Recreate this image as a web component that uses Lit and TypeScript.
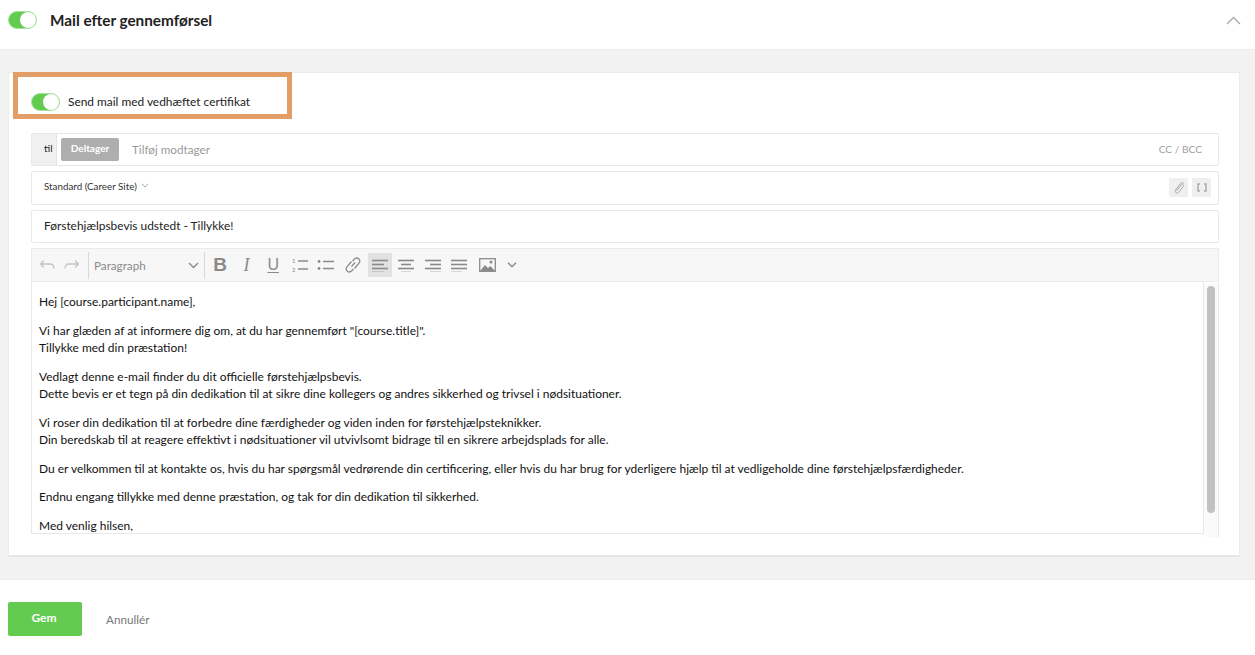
import { LitElement, html, css, svg } from "lit";
import { customElement } from "lit/decorators.js";

const ic = (w: number, h: number, body: unknown, vb = `0 0 ${w} ${h}`) =>
  html`<svg width=${w} height=${h} viewBox=${vb} fill="none" stroke="currentColor" stroke-width="1.3">${body}</svg>`;

const lines = (rows: [number, number][]) =>
  rows.map(([a, b], i) => svg`<path d="M${a} ${2.5 + i * 4}H${b}" stroke-width="1.6"/>`);

@customElement("app-root")
export class AppRoot extends LitElement {
  static styles = css`
    :host { display: block; width: 1255px; height: 655px; overflow: hidden; background: #fff; position: relative;
      font-family: "Lato", "Liberation Sans", sans-serif; color: #1c1c1c; }
    * { box-sizing: border-box; }
    .head { height: 50px; display: flex; align-items: center; padding: 0 14px 9px 8px; border-bottom: 1px solid #ececec; }
    .head .title { font-size: 15.3px; font-weight: 700; margin-left: 13px; flex: 1; color: #222; }
    .chev { color: #a8a8a8; display: flex; }
    .toggle { width: 29px; height: 18px; border-radius: 9px; background: #62cb50; position: relative; border: 1px solid #a9e29f; flex: none; }
    .toggle::after { content: ""; position: absolute; right: 0; top: 0; width: 16px; height: 16px; border-radius: 50%; background: #fff; }
    .main { height: 530px; background: #f2f2f2; padding: 22px 15px 0 8px; border-bottom: 1px solid #ececec; }
    .card { height: 485px; background: #fff; border: 1px solid #ebebeb; border-bottom: 2px solid #e6e6e6; padding: 0 20px 0 22px; position: relative; }
    .opt { height: 60px; display: flex; align-items: center; gap: 8px; padding-bottom: 3px; font-size: 11.9px; color: #222; }
    .hl { position: absolute; left: 4px; top: -1px; width: 279px; height: 47px; border: 5px solid #e39d67; pointer-events: none; }
    .field { border: 1px solid #e8e8e8; border-radius: 2px; display: flex; align-items: center; margin-bottom: 5px; background: #fff; }
    .to { height: 33px; }
    .til { width: 25px; height: 100%; background: #f0f0f0; border-right: 1px solid #e4e4e4; font-size: 10px; display: flex; align-items: center; padding: 0 0 3px 12px; }
    .chip { width: 58px; height: 23px; margin-left: 4px; background: #aeaeae; color: #fff; border-radius: 2px; font-size: 10px; font-weight: 700; display: flex; align-items: center; justify-content: center; padding-bottom: 4px; }
    .ph { margin-left: 13px; padding-bottom: 2px; font-size: 11.7px; color: #9b9b9b; flex: 1; }
    .cc { margin-right: 16px; font-size: 10.2px; color: #9e9e9e; padding-bottom: 2px; }
    .tpl { height: 34px; padding: 0 7px 5px 12px; font-size: 9.8px; color: #333; gap: 4px; }
    .tpl .sp { flex: 1; }
    .tpl .c { color: #aaa; display: flex; }
    .sq { width: 19px; height: 19px; background: #efefef; border-radius: 1px; color: #aaa; display: flex; align-items: center; justify-content: center; margin-top: 4px; }
    .subj { height: 33px; padding: 0 12px 2px; font-size: 11.9px; color: #222; }
    .bar { height: 34px; background: #f7f7f7; border: 1px solid #ebebeb; display: flex; align-items: center; padding-left: 3px; color: #8a8a8a; position: relative; }
    .u { color: #c4c4c4; display: flex; }
    .redo { margin: 0 4px 0 1px; }
    .sep { width: 1px; height: 27px; background: #d9d9d9; flex: none; }
    .para { width: 115px; display: flex; align-items: center; justify-content: space-between; padding: 0 5px; font-size: 11.7px; color: #8a8a8a; }
    .tools { display: flex; align-items: center; gap: 2.6px; margin-left: 3px; }
    .b { width: 24px; height: 24px; display: flex; align-items: center; justify-content: center; flex: none; }
    .b.on { background: #e2e2e2; border-radius: 1px; }
    .b.img { margin-left: 2px; }
    .b.more { margin-left: -3px; }
    .bold { font-family: "Liberation Sans", sans-serif; font-size: 19px; font-weight: 700; }
    .ital { font-family: "Liberation Serif", serif; font-size: 18px; font-style: italic; }
    .und { font-family: "Liberation Sans", sans-serif; font-size: 16px; text-decoration: underline; text-underline-offset: 2px; }
    .body { height: 252px; margin-right: 15px; border-left: 1px solid #e8e8e8; border-bottom: 1px solid #e8e8e8; border-right: 1px solid #e8e8e8; padding: 11px 7px 0; font-size: 11.97px; line-height: 17px; overflow: hidden; color: #111; }
    .body p { margin: 0 0 11.9px; }
    .track { position: absolute; right: 20px; top: 210px; width: 15px; height: 254px; background: #fafafa; border-right: 1px solid #e8e8e8; display: flex; justify-content: center; padding-top: 3px; }
    .thumb { width: 8px; height: 227px; border-radius: 4px; background: #c1c1c1; }
    .foot { height: 75px; padding: 22px 8px 0; display: flex; gap: 24px; }
    .save { width: 74px; height: 34px; background: #62cb50; color: #fff; font-size: 12px; font-weight: 700; border-radius: 2px; display: flex; align-items: center; justify-content: center; padding: 0 2px 4px 0; }
    .cancel { font-size: 11.7px; color: #777; height: 34px; display: flex; align-items: center; }
  `;

  render() {
    return html`
      <div class="head">
        <div class="toggle"></div>
        <div class="title">Mail efter gennemførsel</div>
        <span class="chev">${ic(15, 9, svg`<path d="M1 8L7.5 1.5L14 8" stroke-width="1.4"/>`)}</span>
      </div>
      <div class="main">
        <div class="card">
          <div class="opt"><div class="toggle"></div>Send mail med vedhæftet certifikat</div>
          <div class="hl"></div>
          <div class="field to">
            <div class="til">til</div><div class="chip">Deltager</div>
            <div class="ph">Tilføj modtager</div><div class="cc">CC / BCC</div>
          </div>
          <div class="field tpl">
            Standard (Career Site)
            <span class="c">${ic(8, 5, svg`<path d="M.8.8L4 4L7.2.8" stroke-width="1"/>`)}</span>
            <span class="sp"></span>
            <span class="sq">${ic(12, 12, svg`<path d="M3.5 9L8 3C9.5 1.5 11.3 3 10 4.8L5.5 10.5C4 12 1.3 10.4 2.5 8L7 2C8.5 .3 10 .6 11 1.5" stroke-width="1"/>`)}</span>
            <span class="sq">${ic(10, 9, svg`<path d="M3 1H1V8H3M7 1H9V8H7" stroke-width="1.4"/>`)}</span>
          </div>
          <div class="field subj">Førstehjælpsbevis udstedt - Tillykke!</div>
          <div class="bar">
            <span class="b u">${ic(16, 12, svg`<path d="M5 1.5L1.5 5L5 8.5M1.5 5H11C13.5 5 15 6.5 15 9.5" />`)}</span>
            <span class="b u redo">${ic(16, 12, svg`<path d="M11 1.5L14.5 5L11 8.5M14.5 5H5C2.5 5 1 6.5 1 9.5" />`)}</span>
            <span class="sep"></span>
            <div class="para">Paragraph ${ic(11, 7, svg`<path d="M1 1L5.5 5.5L10 1" stroke-width="1.4"/>`)}</div>
            <span class="sep"></span>
            <div class="tools">
              <span class="b bold">B</span>
              <span class="b ital">I</span>
              <span class="b und">U</span>
              <span class="b">${ic(18, 16, svg`<path d="M7 4H17M7 12H17" stroke-width="1.5"/><text x="1" y="6" font-size="6" fill="currentColor" stroke="none">1</text><text x="1" y="15" font-size="6" fill="currentColor" stroke="none">2</text>`)}</span>
              <span class="b">${ic(18, 12, svg`<path d="M6 2.5H17M6 9.5H17" stroke-width="1.5"/><circle cx="2" cy="2.5" r="1.4" fill="currentColor" stroke="none"/><circle cx="2" cy="9.5" r="1.4" fill="currentColor" stroke="none"/>`)}</span>
              <span class="b">${ic(16, 16, svg`<path d="M6.5 9.5L10 5.5M7.5 4L9.5 2C11 .8 13 1 14 2.2C15 3.4 15 5.2 13.8 6.4L9.5 11.5M8.5 12L6.5 14C5 15.2 3 15 2 13.8C1 12.6 1 10.8 2.2 9.6L6.5 4.5"/>`)}</span>
              <span class="b on">${ic(16, 14, lines([[0, 16], [0, 12], [0, 16], [0, 12]]))}</span>
              <span class="b">${ic(16, 14, lines([[0, 16], [3, 13], [0, 16], [3, 13]]))}</span>
              <span class="b">${ic(16, 14, lines([[0, 16], [5, 16], [0, 16], [5, 16]]))}</span>
              <span class="b">${ic(16, 14, lines([[0, 16], [0, 16], [0, 16], [0, 11]]))}</span>
              <span class="b img">${ic(17, 14, svg`<rect x=".7" y=".7" width="15.6" height="12.6"/><path d="M1 13L6 7L9 10L11.5 8L16 13Z" fill="currentColor" stroke="none"/><circle cx="12" cy="4" r="1.5" fill="currentColor" stroke="none"/>`)}</span>
              <span class="b more">${ic(10, 6, svg`<path d="M1 .8L5 4.8L9 .8" stroke-width="1.4"/>`)}</span>
            </div>
          </div>
          <div class="body">
            <p>Hej [course.participant.name],</p>
            <p>Vi har glæden af at informere dig om, at du har gennemført "[course.title]".<br>Tillykke med din præstation!</p>
            <p>Vedlagt denne e-mail finder du dit officielle førstehjælpsbevis.<br>Dette bevis er et tegn på din dedikation til at sikre dine kollegers og andres sikkerhed og trivsel i nødsituationer.</p>
            <p>Vi roser din dedikation til at forbedre dine færdigheder og viden inden for førstehjælpsteknikker.<br>Din beredskab til at reagere effektivt i nødsituationer vil utvivlsomt bidrage til en sikrere arbejdsplads for alle.</p>
            <p>Du er velkommen til at kontakte os, hvis du har spørgsmål vedrørende din certificering, eller hvis du har brug for yderligere hjælp til at vedligeholde dine førstehjælpsfærdigheder.</p>
            <p>Endnu engang tillykke med denne præstation, og tak for din dedikation til sikkerhed.</p>
            <p>Med venlig hilsen,</p>
          </div>
          <div class="track"><div class="thumb"></div></div>
        </div>
      </div>
      <div class="foot">
        <div class="save">Gem</div>
        <div class="cancel">Annullér</div>
      </div>
    `;
  }
}
